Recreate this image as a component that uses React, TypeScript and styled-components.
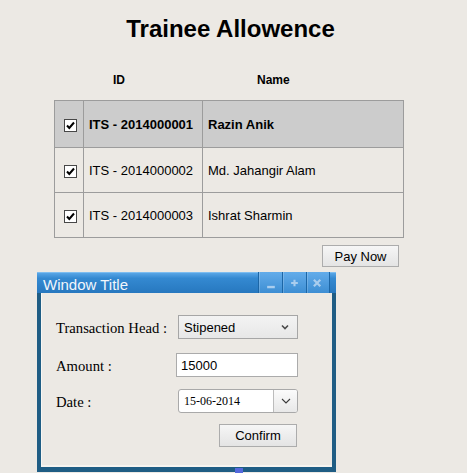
import React from "react";
import styled, { createGlobalStyle } from "styled-components";

const GlobalStyle = createGlobalStyle`
  html, body { margin: 0; padding: 0; background: #ece9e4; }
  body { font-family: "Liberation Sans", Arial, sans-serif; color: #000; }
  * { box-sizing: border-box; }
`;

const Page = styled.div`
  width: 467px;
  height: 473px;
  overflow: hidden;
  padding-top: 15px;
`;

const Title = styled.h1`
  margin: 0;
  width: 461px;
  text-align: center;
  font-size: 24px;
  line-height: 28px;
  font-weight: bold;
`;

const HeaderRow = styled.div`
  display: flex;
  margin: 30px 0 0 113px;
  font-size: 12px;
  line-height: 14px;
  font-weight: bold;
`;

const HeaderCell = styled.div<{ $w?: number }>`
  width: ${(p) => (p.$w ? `${p.$w}px` : "auto")};
`;

const ListSection = styled.div`
  margin: 13px 0 0 55px;
  width: 349px;
  display: flex;
  flex-direction: column;
  align-items: flex-end;
`;

const Table = styled.table`
  width: 349px;
  border-collapse: collapse;
  table-layout: fixed;
  font-size: 13px;
`;

const Row = styled.tr<{ $selected?: boolean }>`
  background: ${(p) => (p.$selected ? "#cccccc" : "transparent")};
  font-weight: ${(p) => (p.$selected ? "bold" : "normal")};
`;

const Cell = styled.td<{ $h: number; $check?: boolean }>`
  border: 1px solid #9c9c9c;
  height: ${(p) => p.$h}px;
  padding: ${(p) => (p.$check ? "0 0 0 9px" : "0 5px")};
  vertical-align: middle;
  white-space: nowrap;
`;

const CheckBox = styled.span`
  display: inline-flex;
  width: 13px;
  height: 13px;
  border: 1px solid #474747;
  background: #fff;
  align-items: center;
  justify-content: center;
  vertical-align: middle;
`;

const PushButton = styled.button<{ $w: number; $h: number }>`
  width: ${(p) => p.$w}px;
  height: ${(p) => p.$h}px;
  padding: 0;
  border: 1px solid #acacac;
  border-radius: 0;
  background: linear-gradient(#f6f6f6, #e4e4e4);
  font-family: "Liberation Sans", Arial, sans-serif;
  font-size: 13px;
  color: #000;
`;

const PayButton = styled(PushButton)`
  margin: 7px 5px 0 0;
`;

const Window = styled.div`
  position: relative;
  margin: 5px 0 0 37px;
  width: 299px;
  height: 200px;
  background: #1f5d84;
  display: flex;
  flex-direction: column;
`;

const TitleBar = styled.div`
  height: 21px;
  display: flex;
  padding-right: 6px;
  background: linear-gradient(#5fabea 0%, #3489d1 30%, #2778bf 100%);
  box-shadow: inset 0 1px 0 #7dbdf0;
`;

const TitleText = styled.div`
  flex: 1;
  padding: 4px 0 0 6px;
  font-size: 15px;
  line-height: 17px;
  color: #f1f6fc;
`;

const TitleButton = styled.div`
  width: 24px;
  height: 21px;
  border-left: 1px solid #1c66a6;
  background: linear-gradient(#63acea, #3d8ed3);
  box-shadow: inset 1px 0 0 rgba(255, 255, 255, 0.18);
  display: flex;
  &:last-child {
    border-right: 1px solid #1c66a6;
  }
`;

const BodyWrap = styled.div`
  flex: 1;
  display: flex;
  padding: 0 4px 5px 4px;
`;

const Body = styled.div`
  flex: 1;
  background: #ece9e4;
  border-left: 1px solid #f8f7f4;
  border-bottom: 2px solid #f6f4f0;
  padding: 22px 34px 0 14px;
  display: flex;
  flex-direction: column;
`;

const FieldRow = styled.div<{ $gap: number; $end?: boolean }>`
  display: flex;
  align-items: center;
  justify-content: ${(p) => (p.$end ? "flex-end" : "flex-start")};
  margin-top: ${(p) => p.$gap}px;
`;

const Label = styled.div`
  width: 120px;
  padding-top: 3px;
  font-family: "Liberation Serif", "Times New Roman", serif;
  font-size: 14.67px;
  white-space: nowrap;
`;

const SelectBox = styled.div`
  width: 120px;
  height: 24px;
  margin-left: 2px;
  border: 1px solid #a6a6a6;
  background: linear-gradient(#f3f3f3, #e7e7e7);
  display: flex;
  align-items: center;
  justify-content: space-between;
  padding: 0 8px 0 5px;
  font-size: 13px;
`;

const TextInput = styled.input`
  width: 122px;
  height: 24px;
  border: 1px solid #ababab;
  background: #fff;
  padding: 0 4px;
  margin: 0;
  font-family: "Liberation Sans", Arial, sans-serif;
  font-size: 13px;
  color: #000;
  outline: none;
`;

const DateBox = styled.div`
  width: 120px;
  height: 24px;
  margin-left: 2px;
  border: 1px solid #a9a9a9;
  border-radius: 3px;
  background: #fff;
  overflow: hidden;
  display: flex;
`;

const DateText = styled.div`
  flex: 1;
  display: flex;
  align-items: center;
  padding-left: 5px;
  font-family: "Liberation Serif", "Times New Roman", serif;
  font-size: 12px;
`;

const DateButton = styled.div`
  width: 24px;
  border-left: 1px solid #bcbcbc;
  background: linear-gradient(#fbfbfb, #e8e8e8);
  display: flex;
  align-items: center;
  justify-content: center;
`;

const ConfirmButton = styled(PushButton)`
  margin-right: 1px;
`;

const ResizeMark = styled.div`
  position: absolute;
  left: 198px;
  bottom: -2px;
  width: 8px;
  height: 6px;
  background: #5569dc;
`;

const Tick = () => (
  <svg width="11" height="11" viewBox="0 0 11 11">
    <polyline points="2,5.5 4.3,8 9,2.5" fill="none" stroke="#000" strokeWidth="2" />
  </svg>
);

const SmallChevron = () => (
  <svg width="8" height="6" viewBox="0 0 8 6">
    <polyline points="1,1.5 4,4.5 7,1.5" fill="none" stroke="#4a4a4a" strokeWidth="1.6" />
  </svg>
);

const ThinChevron = () => (
  <svg width="10" height="6" viewBox="0 0 10 6">
    <polyline points="1,1 5,5 9,1" fill="none" stroke="#3c3c3c" strokeWidth="1.1" />
  </svg>
);

const iconColor = "#a9cdee";

const MinusIcon = () => (
  <svg width="24" height="21" viewBox="0 0 24 21">
    <rect x="8.5" y="14" width="8" height="2.5" fill={iconColor} />
  </svg>
);

const PlusIcon = () => (
  <svg width="24" height="21" viewBox="0 0 24 21">
    <path d="M8.5 11H15.5M12 7.5V14.5" stroke={iconColor} strokeWidth="2.2" />
  </svg>
);

const CloseIcon = () => (
  <svg width="24" height="21" viewBox="0 0 24 21">
    <path d="M7.5 7.5L14.5 14.5M14.5 7.5L7.5 14.5" stroke={iconColor} strokeWidth="2.4" />
  </svg>
);

const trainees = [
  { id: "ITS - 2014000001", name: "Razin Anik", selected: true },
  { id: "ITS - 2014000002", name: "Md. Jahangir Alam", selected: false },
  { id: "ITS - 2014000003", name: "Ishrat Sharmin", selected: false },
];

export default function App() {
  return (
    <>
      <GlobalStyle />
      <Page>
        <Title>Trainee Allowence</Title>
        <HeaderRow>
          <HeaderCell $w={144}>ID</HeaderCell>
          <HeaderCell>Name</HeaderCell>
        </HeaderRow>
        <ListSection>
          <Table>
            <colgroup>
              <col style={{ width: 29 }} />
              <col style={{ width: 119 }} />
              <col style={{ width: 201 }} />
            </colgroup>
            <tbody>
              {trainees.map((t) => {
                const h = t.selected ? 47 : 45;
                return (
                  <Row key={t.id} $selected={t.selected}>
                    <Cell $h={h} $check>
                      <CheckBox>
                        <Tick />
                      </CheckBox>
                    </Cell>
                    <Cell $h={h}>{t.id}</Cell>
                    <Cell $h={h}>{t.name}</Cell>
                  </Row>
                );
              })}
            </tbody>
          </Table>
          <PayButton $w={77} $h={22}>Pay Now</PayButton>
        </ListSection>
        <Window>
          <TitleBar>
            <TitleText>Window Title</TitleText>
            <TitleButton>
              <MinusIcon />
            </TitleButton>
            <TitleButton>
              <PlusIcon />
            </TitleButton>
            <TitleButton>
              <CloseIcon />
            </TitleButton>
          </TitleBar>
          <BodyWrap>
            <Body>
              <FieldRow $gap={0}>
                <Label>Transaction Head :</Label>
                <SelectBox>
                  <span>Stipened</span>
                  <SmallChevron />
                </SelectBox>
              </FieldRow>
              <FieldRow $gap={14}>
                <Label>Amount :</Label>
                <TextInput defaultValue="15000" />
              </FieldRow>
              <FieldRow $gap={12}>
                <Label>Date :</Label>
                <DateBox>
                  <DateText>15-06-2014</DateText>
                  <DateButton>
                    <ThinChevron />
                  </DateButton>
                </DateBox>
              </FieldRow>
              <FieldRow $gap={11} $end>
                <ConfirmButton $w={78} $h={23}>Confirm</ConfirmButton>
              </FieldRow>
            </Body>
          </BodyWrap>
          <ResizeMark />
        </Window>
      </Page>
    </>
  );
}
